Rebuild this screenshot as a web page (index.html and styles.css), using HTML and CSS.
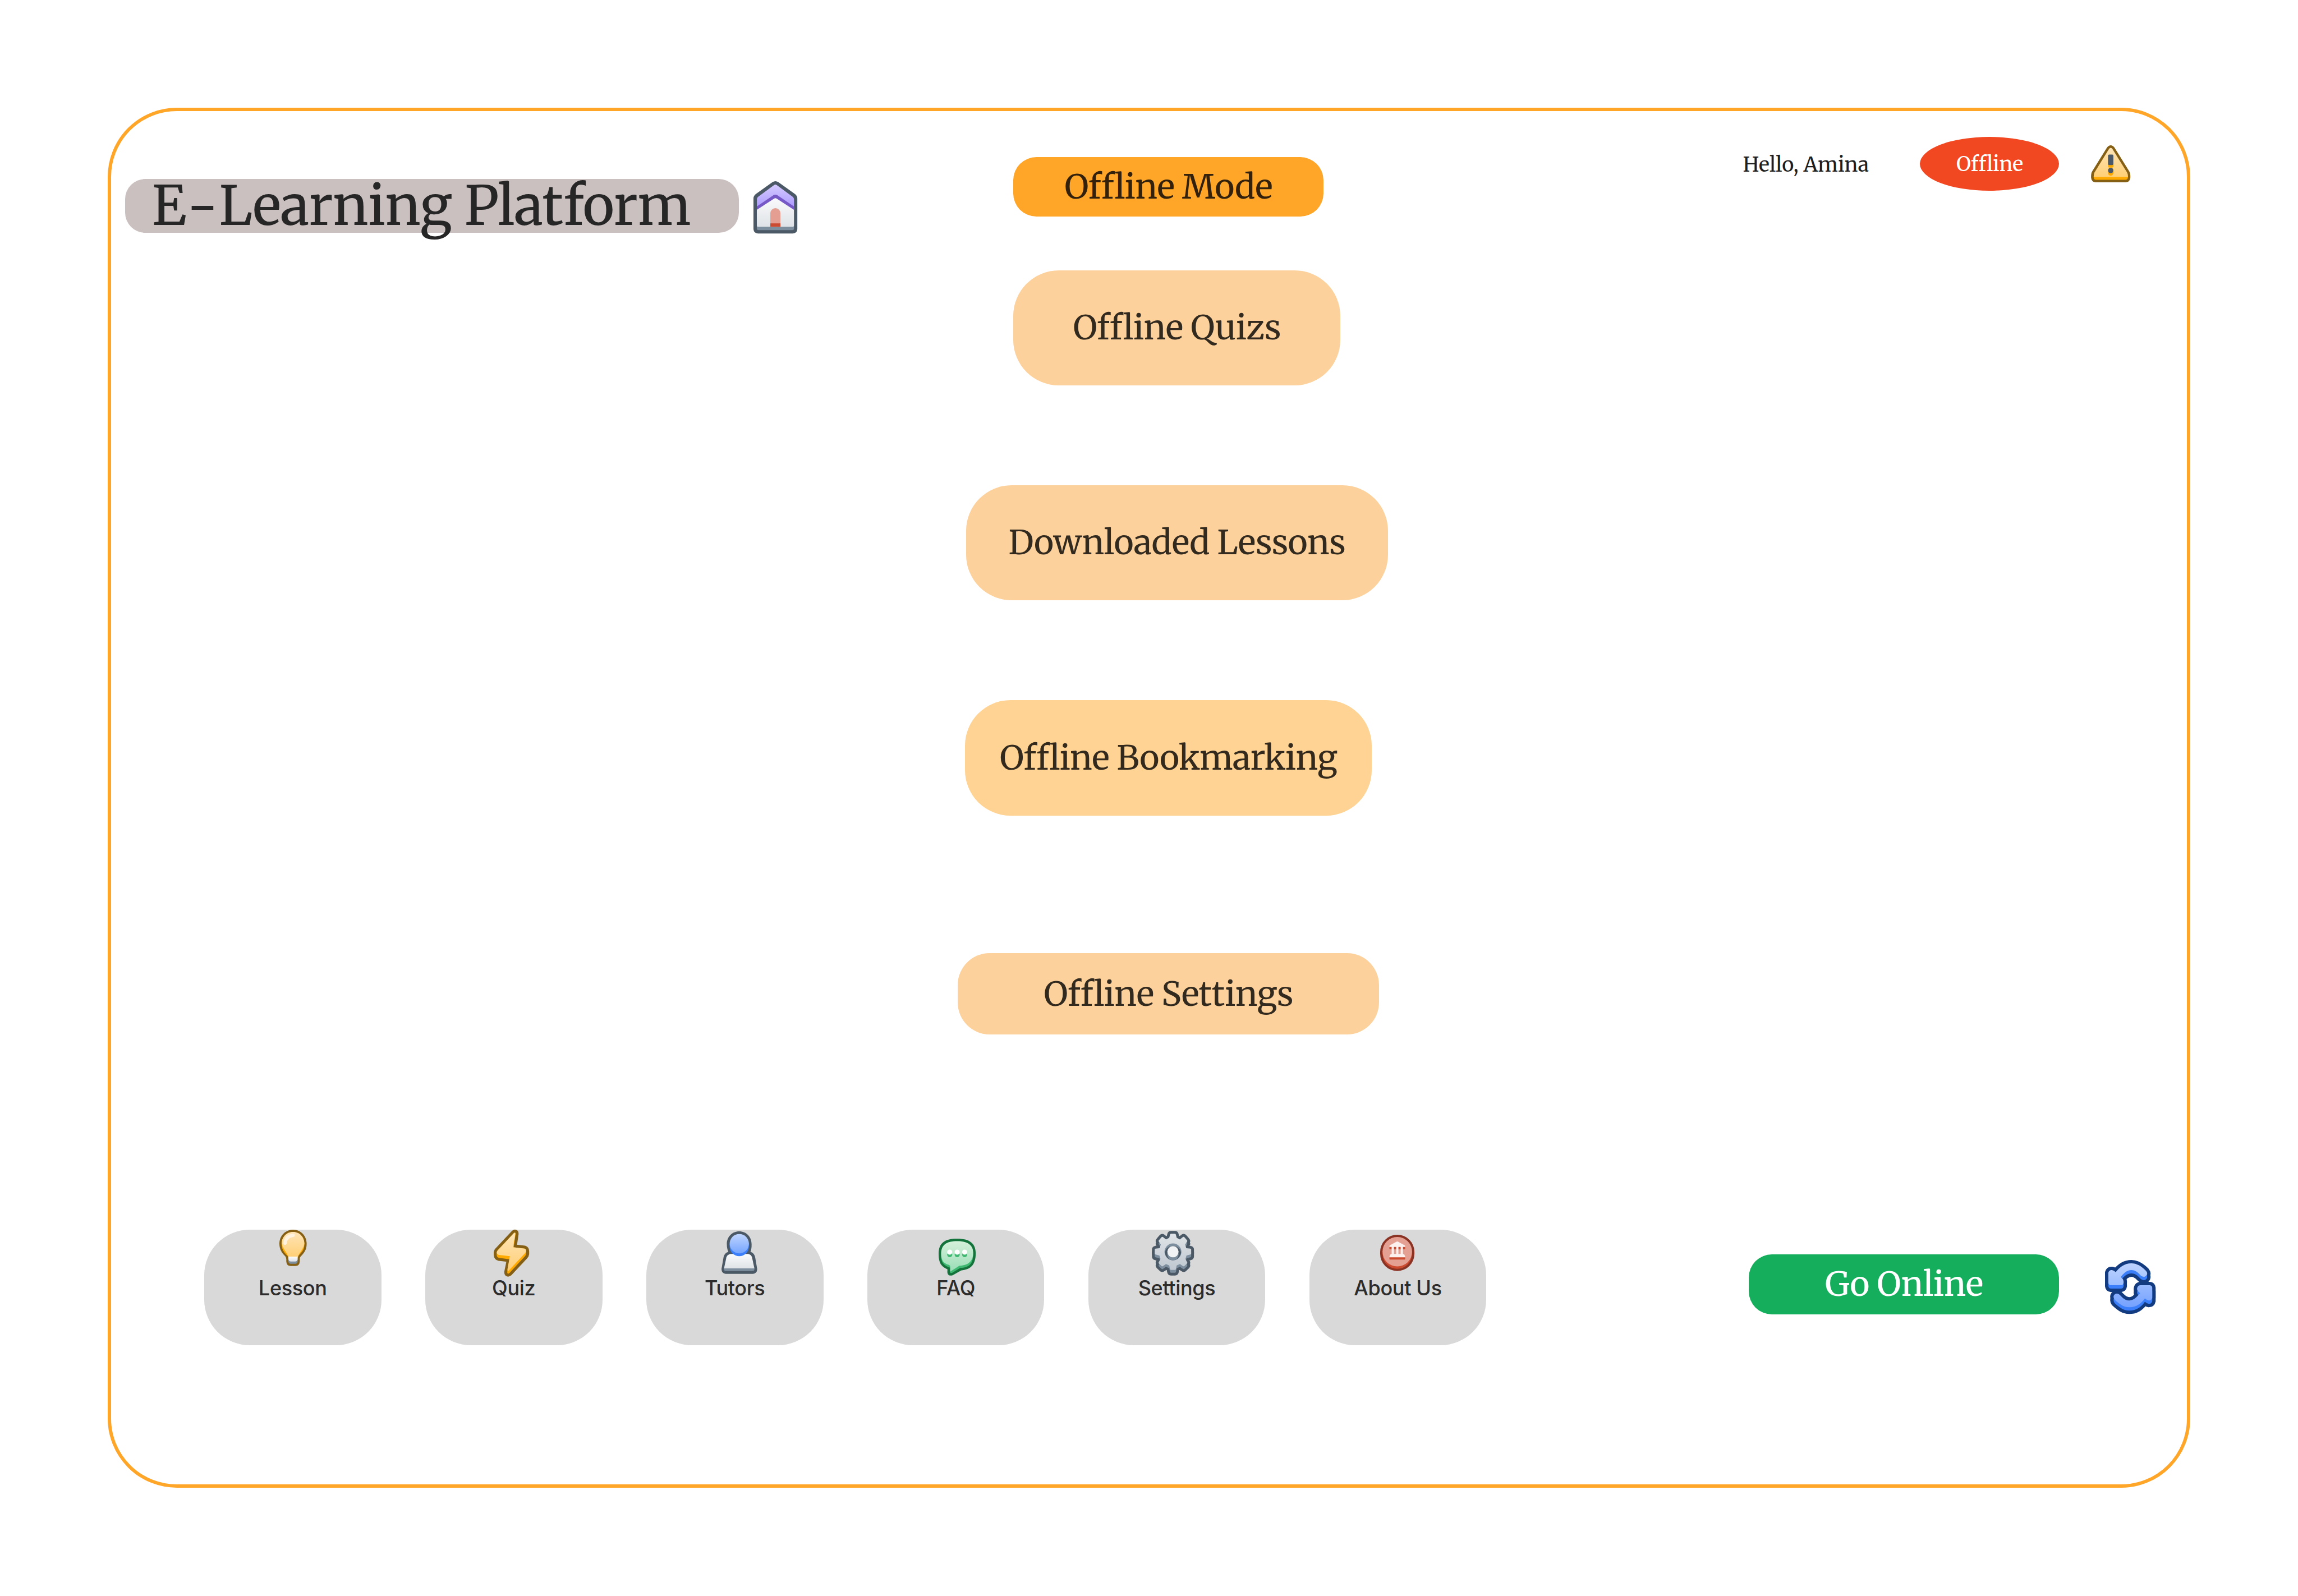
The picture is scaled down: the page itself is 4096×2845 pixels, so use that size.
FILE: index.html
```
<!DOCTYPE html>
<html lang="en">
<head>
<meta charset="utf-8">
<title>E-Learning Platform</title>
<link rel="stylesheet" href="styles.css">
</head>
<body>
<svg class="defs" aria-hidden="true">
  <defs>
    <linearGradient id="amber" x1="0" y1="0" x2="0" y2="1"><stop offset="0" stop-color="#FFE5B8"/><stop offset="1" stop-color="#FFCF75"/></linearGradient>
    <linearGradient id="violet" x1="0" y1="0" x2="0" y2="1"><stop offset="0" stop-color="#D5CAFF"/><stop offset="1" stop-color="#A795FF"/></linearGradient>
    <linearGradient id="paper" x1="0" y1="0" x2="0" y2="1"><stop offset="0" stop-color="#FAFBFC"/><stop offset="1" stop-color="#DFE3E7"/></linearGradient>
    <linearGradient id="sky" x1="0" y1="0" x2="0" y2="1"><stop offset="0" stop-color="#BFD5FF"/><stop offset="1" stop-color="#75A4FF"/></linearGradient>
    <linearGradient id="mint" x1="0" y1="0" x2="0" y2="1"><stop offset="0" stop-color="#D6F1DA"/><stop offset="1" stop-color="#98DDB6"/></linearGradient>
    <linearGradient id="steel" x1="0" y1="0" x2="0" y2="1"><stop offset="0" stop-color="#E0E4E8"/><stop offset="1" stop-color="#BFC7D0"/></linearGradient>
    <linearGradient id="sync-top" x1="0" y1="0" x2="0" y2="1"><stop offset="0" stop-color="#BDD3FF"/><stop offset="1" stop-color="#9DBEFF"/></linearGradient>
    <linearGradient id="sync-bottom" x1="0" y1="0" x2="0" y2="1"><stop offset="0" stop-color="#97B9FF"/><stop offset="1" stop-color="#75A2FF"/></linearGradient>
  </defs>
</svg>

<div class="frame">
  <header class="brand">
    <h1 class="brand-name"><span class="prefix">E-</span>Learning Platform</h1>
    <svg class="home" viewBox="78 60 312 372">
      <path fill="#4B5966" d="M214 66Q234 54 254 66L374 152Q390 164 390 184V400Q388 430 358 432H110Q80 430 78 400V184Q78 164 94 152Z"/>
      <path fill="#7D8F9F" d="M102 300H366V396Q366 408 354 408H114Q102 408 102 396Z"/>
      <path fill="url(#violet)" d="M224 88Q234 80 244 88L358 172Q366 179 366 190V262H102V190Q102 179 110 172Z"/>
      <path fill="url(#paper)" d="M102 250L226 174Q234 168 242 174L366 250V376Q366 384 358 384H110Q102 384 102 376Z"/>
      <path fill="#7658C6" d="M102 240L220 160Q234 151 248 160L366 240V264L243 184Q234 177 225 184L102 264Z"/>
      <path fill="#E49F92" d="M198 384V288a36 36 0 0 1 72 0V384Z"/>
      <path fill="#CB4A32" d="M198 360H270V384H198Z"/>
    </svg>
  </header>

  <main class="modes">
    <h2 class="pill mode">Offline Mode</h2>
    <a class="pill quizzes">Offline Quizs</a>
    <a class="pill lessons">Downloaded Lessons</a>
    <a class="pill bookmarks">Offline Bookmarking</a>
    <a class="pill prefs">Offline Settings</a>
  </main>

  <aside class="status">
    <span class="hello">Hello, Amina</span>
    <span class="state">Offline</span>
    <svg class="warning" viewBox="52 42 280 263">
      <path fill="#855F14" d="M166 57Q192 27 218 57L324 228Q332 240 332 270Q329 303 300 305H84Q55 303 52 270Q52 240 60 228Z"/>
      <path fill="#FFAA00" d="M71 260H315V268Q313 287 296 287H88Q71 287 71 268Z"/>
      <path fill="url(#amber)" d="M180 68Q192 52 204 68L309 236Q315 246 315 267H71Q71 246 76 236Z"/>
      <rect fill="#FFAA00" x="173" y="125" width="38" height="76" rx="9"/>
      <rect fill="#FFAA00" x="173" y="202" width="38" height="56" rx="19"/>
      <rect fill="#4B5868" x="173" y="108" width="38" height="75" rx="8"/>
      <circle fill="#4B5868" cx="192" cy="221" r="19"/>
    </svg>
  </aside>

  <nav class="tabs">
    <a class="tab">
      <span class="slot"><svg class="bulb" viewBox="68 78 195 258">
        <path fill="#855F14" d="M165 78C220 78 262 122 262 178C262 225 240 248 220 268Q213 275 213 287V303Q212 335 181 336H149Q118 335 117 303V287Q117 275 108 266C88 246 68 220 68 178C68 122 110 78 165 78Z"/>
        <path fill="#FFAA00" d="M165 94C212 94 246 132 246 178C246 225 225 240 205 262Q198 270 198 280H132Q130 268 122 260C104 242 84 222 84 178C84 132 118 94 165 94Z"/>
        <path fill="url(#amber)" d="M165 94C212 94 246 132 246 178C240 215 210 240 200 272H132C122 240 92 215 84 178C84 132 118 94 165 94Z"/>
        <path fill="#7D8F9F" d="M132 285H198V304Q196 320 182 320H148Q134 320 132 304Z"/>
        <path fill="url(#paper)" d="M132 270H198V288Q196 304 182 304H148Q134 304 132 288Z"/>
        <path fill="none" stroke="#FFF3DF" stroke-width="24" stroke-linecap="round" d="M108 174Q112 124 165 118"/>
      </svg></span>
      <span class="label">Lesson</span>
    </a>
    <a class="tab">
      <span class="slot"><svg class="bolt" viewBox="60 78 252 336">
        <path fill="#FFAA00" stroke="#855F14" stroke-width="42" stroke-linejoin="round" d="M203 103Q216 92 216 108L202 204L280 213Q291 218 291 232V250Q290 260 282 268L172 386Q157 398 156 380L175 288L98 279Q82 276 81 256V240Q82 232 87 227Z"/>
        <path fill="#FFAA00" d="M203 103Q216 92 216 108L202 204L280 213Q291 218 291 232V250Q290 260 282 268L172 386Q157 398 156 380L172 288L98 279Q82 276 81 256V240Q82 232 87 227Z"/>
        <path fill="url(#amber)" d="M203 103Q215 92 214 108L198 203L280 213Q297 220 286 242L166 370Q156 374 158 358L175 267L95 258Q74 248 87 227Z"/>
      </svg></span>
      <span class="label">Quiz</span>
    </a>
    <a class="tab">
      <span class="slot"><svg class="tutor" viewBox="60 60 254 302">
        <path fill="#4B5966" d="M186 60C236 60 274 98 274 150Q275 185 266 206Q292 214 299 242L314 328Q313 360 284 362H90Q61 360 60 328L75 242Q82 214 109 206Q98 185 98 150C98 98 136 60 186 60Z"/>
        <path fill="#7D8F9F" d="M78 318H294V330Q293 342 281 342H91Q79 342 78 330Z"/>
        <path fill="url(#paper)" d="M125 221H249Q271 224 277 245L294 323H78L95 245Q102 224 125 221Z"/>
        <path fill="#3B7FFA" d="M118 148H255V168A68.5 69 0 0 1 118 168Z"/>
        <ellipse fill="url(#sky)" cx="186.500" cy="148" rx="68.500" ry="69"/>
      </svg></span>
      <span class="label">Tutors</span>
    </a>
    <a class="tab">
      <span class="slot"><svg class="chat" viewBox="45 81 264 264">
        <path fill="#14733B" d="M177 81C265 81 309 115 309 185C309 270 270 302 205 307L145 341Q109 352 107 318L108 299C65 282 45 255 45 190C45 110 90 81 177 81Z"/>
        <path fill="#3FB872" d="M177 99C250 99 291 125 291 190C291 262 260 288 200 289L141 324Q126 330 126 313V288C82 272 63 252 63 205C63 125 100 99 177 99Z"/>
        <path fill="url(#mint)" d="M177 99C250 99 291 125 291 182C291 246 250 272 193 274L128 315L128 288Q128 272 118 268C80 258 63 236 63 190C63 125 100 99 177 99Z"/>
        <g fill="#3FB872"><rect x="106" y="177" width="36" height="36" rx="18"/><rect x="159" y="177" width="36" height="36" rx="18"/><rect x="212" y="177" width="36" height="36" rx="18"/></g>
        <g fill="#fff"><circle cx="124" cy="177" r="18"/><circle cx="177" cy="177" r="18"/><circle cx="230" cy="177" r="18"/></g>
      </svg></span>
      <span class="label">FAQ</span>
    </a>
    <a class="tab">
      <span class="slot"><svg class="gear" viewBox="62 54 301 318">
        <defs><path id="cog" d="M198 75H227Q232 75 233 81L239 104L262 116L284 98Q289 95 294 100L312 121Q317 126 313 131L299 152L307 178L336 181Q342 182 342 188V216Q342 222 336 223L309 230L301 255L313 276Q317 281 313 286L294 304Q289 309 284 305L262 290L239 300L234 325Q233 332 227 332H198Q192 332 191 325L186 300L163 290L141 305Q136 309 131 304L112 286Q108 281 112 276L124 255L116 230L89 223Q83 222 83 216V188Q83 182 89 181L118 178L126 152L112 131Q108 126 113 121L131 100Q136 95 141 98L163 116L186 104L192 81Q193 75 198 75Z"/></defs>
        <g fill="#4B5966" stroke="#4B5966" stroke-width="40" stroke-linejoin="round"><use href="#cog"/><use href="#cog" y="20"/></g>
        <use href="#cog" y="20" fill="#7D8F9F"/>
        <use href="#cog" fill="url(#steel)"/>
        <circle fill="#7D8F9F" cx="212.500" cy="204" r="60"/>
        <path fill="#4B5966" d="M212 163C245 163 264 182 270 208C265 240 245 262 212 264C180 262 160 240 155 208C160 182 180 163 212 163Z"/>
        <ellipse fill="#7D8F9F" cx="212.500" cy="224" rx="40" ry="40"/>
        <circle fill="#F0F2F4" cx="212.500" cy="203" r="40"/>
      </svg></span>
      <span class="label">Settings</span>
    </a>
    <a class="tab">
      <span class="slot"><svg class="about" viewBox="67 54 244 258">
        <rect fill="#8A3324" x="67" y="54" width="244" height="258" rx="122"/>
        <rect fill="#CC4A2F" x="84" y="70" width="210" height="226" rx="105"/>
        <circle fill="#E3A093" cx="189" cy="175" r="105"/>
        <g fill="#CC4A2F"><rect x="133" y="138" width="112" height="20" rx="4"/><rect x="133" y="210" width="112" height="21" rx="4"/></g>
        <path fill="#E3A093" d="M149 141H229V192H149Z"/>
        <path fill="#CC4A2F" d="M149 141H229V158H149Z"/>
        <path fill="#FCF1EF" d="M133 141V135Q133 131 137 129L185 103Q189 101 193 103L241 129Q245 131 245 135V141H229V191Q242 193 242 204Q245 206 245 210V215H133V210Q133 206 136 204Q137 193 149 191V141ZM165 141V191H181V141ZM197 141V191H213V141Z"/>
      </svg></span>
      <span class="label">About Us</span>
    </a>
  </nav>

  <div class="online">
    <a class="pill go">Go Online</a>
    <svg class="sync" viewBox="90 84 360 384">
      <defs>
        <path id="arrow-back" d="M166 171C190 140 225 108 278 108C320 108 352 132 382 162Q394 176 388 190Q376 210 352 200C336 192 318 156 278 156C244 156 222 180 202 206L214 217Q222 225 222 236V246Q220 264 204 264H132Q116 264 114 246V174Q120 154 140 156Q154 158 166 171Z"/>
        <path id="arrow-next" d="M152 338Q164 316 190 328C206 340 225 372 262 372C298 372 318 344 340 320L326 308Q314 296 320 280Q326 264 342 264H408Q425 265 426 282V352Q422 372 402 372Q386 370 374 357C350 388 320 420 262 420C220 420 190 396 158 366Q148 352 152 338Z"/>
      </defs>
      <g fill="#133B80" stroke="#133B80" stroke-width="48" stroke-linejoin="round"><use href="#arrow-back"/><use href="#arrow-back" y="24"/><use href="#arrow-next"/><use href="#arrow-next" y="24"/></g>
      <g fill="#3B7FFA"><use href="#arrow-back" y="24"/><use href="#arrow-next" y="24"/></g>
      <use href="#arrow-back" fill="url(#sync-top)"/>
      <use href="#arrow-next" fill="url(#sync-bottom)"/>
    </svg>
  </div>
</div>
</body>
</html>
```
FILE: styles.css
```
/* 1rem = 100 design units on a 5448-unit wide canvas */
html {
  font-size: 75.184px;
}

* {
  box-sizing: border-box;
}

body {
  margin: 0;
  height: 100vh;
  padding: 2.56rem;
  overflow: hidden;
  background: #fff;
  font-family: "Merriweather", "DejaVu Serif Condensed", "DejaVu Serif", serif;
  font-size: 0.8rem;
  color: #262626;
}

.defs {
  position: absolute;
  width: 0;
  height: 0;
}

svg {
  display: block;
  flex: none;
  overflow: visible;
}

.frame {
  display: grid;
  grid-template-columns: 19.86rem 10.4rem 1fr;
  grid-template-rows: 26.52rem 1fr;
  width: 49.36rem;
  height: 32.72rem;
  border: 0.08rem solid #ffa629;
  border-radius: 1.64rem;
}

/* top left */
.brand {
  display: flex;
  align-items: flex-start;
  gap: 0.34rem;
  padding: 1.6rem 0 0 0.32rem;
}

.brand-name {
  width: 14.56rem;
  height: 1.28rem;
  margin: 0;
  padding-left: 0.64rem;
  border-radius: 0.48rem;
  background: #cac0bf;
  font-size: 1.28rem;
  font-weight: 400;
  line-height: 1.28rem;
  letter-spacing: -0.0083em;
  white-space: nowrap;
}

.prefix {
  font-kerning: none;
  letter-spacing: 0.014em;
}

.home {
  width: 1.04rem;
  height: 1.24rem;
  margin-top: 0.06rem;
}

/* centre column */
.modes {
  display: flex;
  flex-direction: column;
  align-items: center;
  padding: 1.08rem 0 0 0.4rem;
}

.pill {
  display: flex;
  align-items: center;
  justify-content: center;
  flex: none;
  margin: 0;
  font-size: 0.8rem;
  font-weight: 400;
  line-height: 1;
  letter-spacing: -0.011em;
  white-space: nowrap;
}

.mode {
  width: 7.36rem;
  height: 1.42rem;
  margin-right: 0.4rem;
  border-radius: 0.55rem;
  background: #ffa629;
  color: #33210b;
}

.quizzes,
.lessons,
.bookmarks {
  height: 2.73rem;
  border-radius: 1.08rem;
}

.quizzes,
.lessons,
.prefs {
  background: #fcd19c;
  color: #322a1f;
}

.quizzes {
  width: 7.76rem;
  margin-top: 1.265rem;
}

.lessons {
  width: 10rem;
  margin-top: 2.37rem;
}

.bookmarks {
  width: 9.64rem;
  margin: 2.37rem 0.4rem 0 0;
  background: #ffd393;
  color: #332a1d;
  letter-spacing: -0.0135em;
}

.prefs {
  width: 10rem;
  height: 1.92rem;
  margin: 3.27rem 0.4rem 0 0;
  border-radius: 0.76rem;
}

/* top right */
.status {
  display: flex;
  align-items: flex-start;
  padding: 0.6rem 0 0 8.42rem;
  font-size: 0.48rem;
  line-height: 1.28rem;
  white-space: nowrap;
}

.hello {
  width: 4.2rem;
  padding-top: 0.02rem;
  color: #1e1e1e;
  letter-spacing: 0.002em;
}

.state {
  width: 3.3rem;
  height: 1.28rem;
  border-radius: 50%;
  background: #f24822;
  color: #fff;
  letter-spacing: -0.006em;
  text-align: center;
}

.warning {
  width: 0.936rem;
  height: 0.877rem;
  margin: 0.2rem 0 0 0.75rem;
}

/* bottom navigation */
.tabs {
  grid-column: 1 / 3;
  display: flex;
  align-items: flex-start;
  gap: 1.04rem;
  padding-left: 2.2rem;
}

.tab {
  display: flex;
  flex: none;
  flex-direction: column;
  width: 4.2rem;
  height: 2.73rem;
  border-radius: 1.08rem;
  background: #d9d9d9;
}

.slot {
  display: flex;
  align-items: flex-start;
  height: 1.095rem;
}

.label {
  color: #2c2c2c;
  font-family: Inter, "Liberation Sans", sans-serif;
  font-size: 0.48rem;
  font-weight: 500;
  letter-spacing: -0.01em;
  line-height: 0.58rem;
  text-align: center;
}

.bulb {
  width: 0.65rem;
  height: 0.86rem;
  margin-left: 1.787rem;
}

.bolt {
  width: 0.84rem;
  height: 1.12rem;
  margin-left: 1.62rem;
}

.tutor {
  width: 0.847rem;
  height: 1.007rem;
  margin: 0.04rem 0 0 1.78rem;
}

.chat {
  width: 0.88rem;
  height: 0.88rem;
  margin: 0.21rem 0 0 1.69rem;
}

.gear {
  width: 1.003rem;
  height: 1.06rem;
  margin: 0.02rem 0 0 1.507rem;
}

.about {
  width: 0.813rem;
  height: 0.86rem;
  margin: 0.12rem 0 0 1.683rem;
}

/* bottom right */
.online {
  display: flex;
  align-items: flex-start;
  gap: 1.08rem;
  padding: 0.58rem 0 0 8.56rem;
}

.go {
  width: 7.36rem;
  height: 1.42rem;
  border-radius: 0.55rem;
  background: #14ae5c;
  color: #fff;
}

.sync {
  width: 1.2rem;
  height: 1.28rem;
  margin-top: 0.14rem;
}
```
